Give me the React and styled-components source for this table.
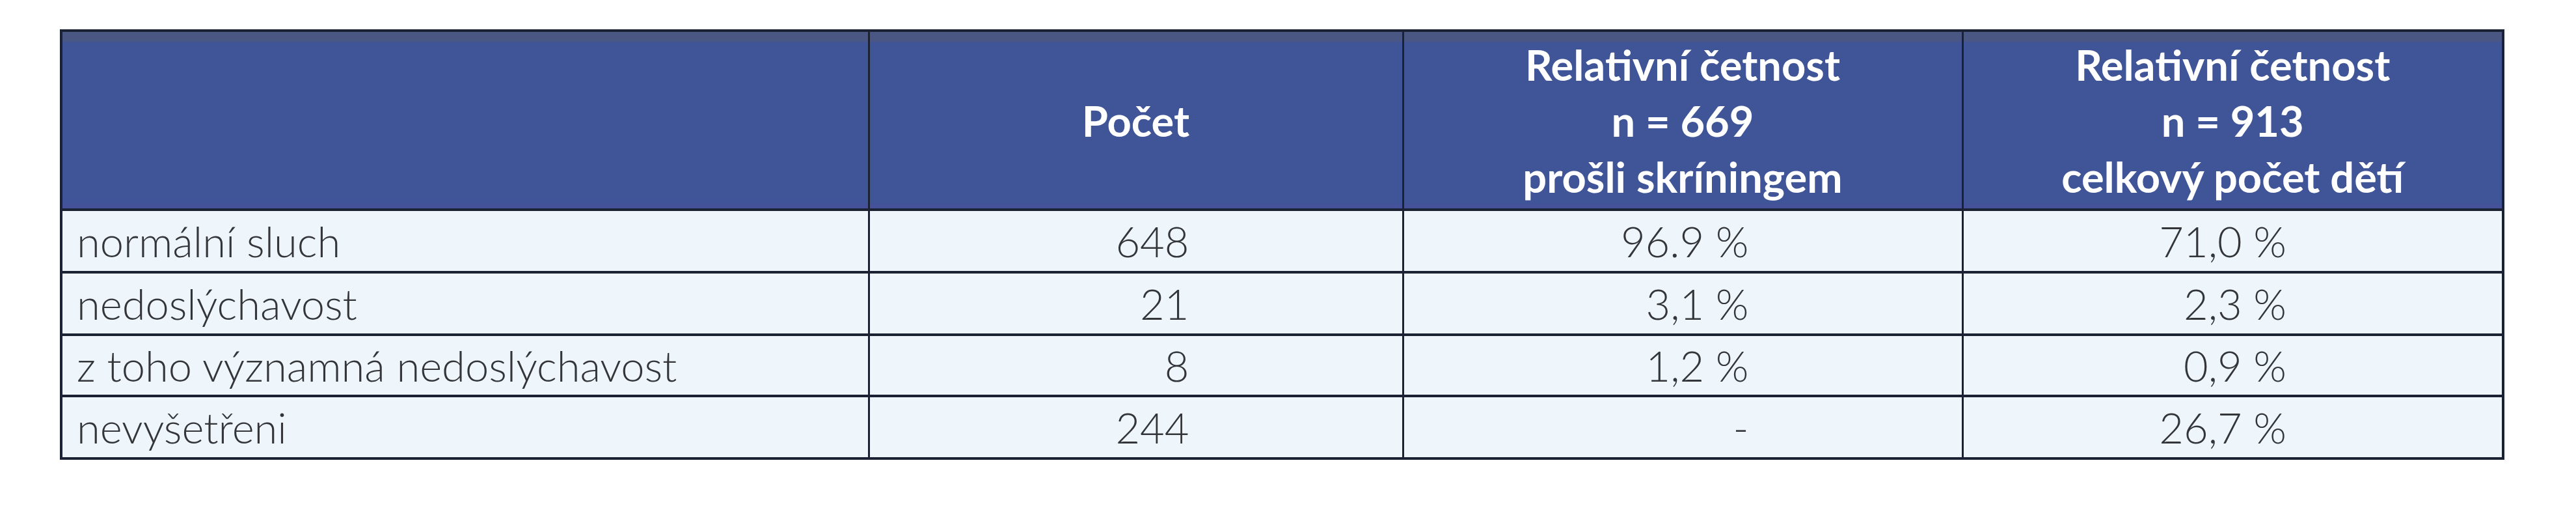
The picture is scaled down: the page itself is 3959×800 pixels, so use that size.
import React from 'react'
import styled, { createGlobalStyle } from 'styled-components'

const rows = [
    { label: 'normální sluch', count: '648', screened: '96.9 %', total: '71,0 %' },
    { label: 'nedoslýchavost', count: '21', screened: '3,1 %', total: '2,3 %' },
    { label: 'z toho významná nedoslýchavost', count: '8', screened: '1,2 %', total: '0,9 %' },
    { label: 'nevyšetřeni', count: '244', screened: '-', total: '26,7 %' },
]

const App = () => {
    return (
        <Page>
            <GlobalStyle />
            <Table>
                <colgroup>
                    <col style={{ width: 1241 }} />
                    <col style={{ width: 821 }} />
                    <col style={{ width: 860 }} />
                    <col style={{ width: 831 }} />
                </colgroup>
                <thead>
                    <tr>
                        <HeadCell />
                        <HeadCell>Počet</HeadCell>
                        <HeadCell>
                            Relativní četnost<br />
                            n = 669<br />
                            prošli skríningem
                        </HeadCell>
                        <HeadCell>
                            Relativní četnost<br />
                            n = 913<br />
                            celkový počet dětí
                        </HeadCell>
                    </tr>
                </thead>
                <tbody>
                    {rows.map(r => (
                        <Row key={r.label}>
                            <LabelCell>{r.label}</LabelCell>
                            <NumCell>{r.count}</NumCell>
                            <NumCell>{r.screened}</NumCell>
                            <NumCell $pad={331}>{r.total}</NumCell>
                        </Row>
                    ))}
                </tbody>
            </Table>
        </Page>
    )
}

const GlobalStyle = createGlobalStyle`
body{
    margin:0;
    background:#ffffff;
    font-family: Lato, "Open Sans", sans-serif;
}
`

const Page = styled.div`
width:3959px;
height:800px;
padding:45px 0 0 92px;
box-sizing:border-box;
background:#ffffff;
`

const Table = styled.table`
width:3753px;
table-layout:fixed;
border-collapse:collapse;
border:4px solid #1b2233;
font-family: Lato, "Open Sans", sans-serif;
font-size:65px;
`

const HeadCell = styled.th`
height:271px;
padding:0;
background:linear-gradient(to bottom, #4a5783 0, #4a5783 13px, #405498 17px, #405498 262px, #47509a 271px);
color:#ffffff;
font-weight:700;
line-height:86px;
text-align:center;
vertical-align:middle;
border-left:3px solid #1b2233;
border-bottom:4px solid #1b2233;
&:first-child{
    border-left:none;
}
`

const Row = styled.tr`
height:96px;
background:#eef6fc;
&:nth-child(3){
    height:94px;
}
`

const LabelCell = styled.td`
padding:0 0 0 22px;
font-weight:300;
color:#333538;
line-height:78px;
white-space:nowrap;
border-bottom:4px solid #1b2233;
`

const NumCell = styled.td`
padding:0 ${p => p.$pad || 327}px 0 0;
text-align:right;
font-weight:300;
color:#333538;
line-height:78px;
border-left:3px solid #1b2233;
border-bottom:4px solid #1b2233;
`

export default App
